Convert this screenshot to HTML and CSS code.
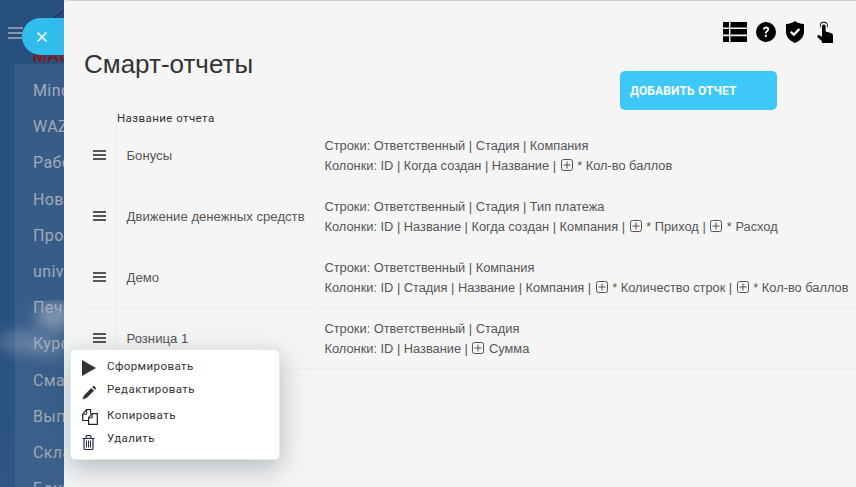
FILE: index.html
```html
<!DOCTYPE html>
<html lang="ru">
<head>
<meta charset="utf-8">
<title>Смарт-отчеты</title>
<link rel="stylesheet" href="styles.css">
</head>
<body>
<div class="stage">
  <aside class="sidebar">
    <svg class="logo" width="12" height="8" viewBox="0 0 12 8"><path d="M0 8L10 0" stroke="#1b2a55" stroke-width="1.200" fill="none"/></svg>
    <div class="burger"><i></i><i></i><i></i></div>
    <div class="brand">MAG</div>
    <svg class="clouds" width="64" height="200" viewBox="0 0 64 200">
      <defs><filter id="blur"><feGaussianBlur stdDeviation="7"/></filter></defs>
      <g fill="#aebccb" filter="url(#blur)">
        <ellipse cx="54" cy="16" rx="18" ry="14" opacity=".55"/>
        <ellipse cx="22" cy="42" rx="24" ry="12" opacity=".32"/>
        <ellipse cx="50" cy="48" rx="20" ry="12" opacity=".24"/>
      </g>
    </svg>
    <ul class="nav">
      <li>Mind</li><li>WAZ</li><li>Рабо</li><li>Ново</li><li>Прос</li><li>unive</li>
      <li>Печк</li><li>Курс</li><li>Смар</li><li>Выпл</li><li>Скла</li><li>Бону</li>
    </ul>
  </aside>
  <button class="close" type="button" aria-label="Закрыть">
    <svg width="12" height="12" viewBox="0 0 12 12"><path d="M1.500 1.500l9 9M10.500 1.500l-9 9" stroke="#fff" stroke-width="1.600" fill="none"/></svg>
  </button>
  <main class="panel">
    <div class="tools">
      <svg width="24" height="20" viewBox="0 0 24 20"><path d="M0 0h6v5.400H0zM7.400 0H24v5.400H7.400zM0 7h6v5.600H0zM7.400 7H24v5.600H7.400zM0 14.200h6V20H0zM7.400 14.200H24V20H7.400z"/></svg>
      <svg width="20" height="20" viewBox="0 0 20 20"><circle cx="10" cy="10" r="10"/><path d="M6.900 7.400c.2-1.800 1.500-2.800 3.200-2.800 1.800 0 3.100 1.100 3.100 2.700 0 2.300-2.500 2.300-2.500 4.200H8.900c0-2.800 2.300-2.800 2.300-4.100 0-.6-.5-1-1.100-1-.7 0-1.200.4-1.300 1.200z" fill="#fff"/><rect x="8.800" y="12.700" width="2" height="2.200" fill="#fff"/></svg>
      <svg width="18" height="22" viewBox="0 0 18 22"><path d="M9 0c2 1.700 5 2.900 9 3.100v7.400C18 15.800 14.500 19.800 9 22 3.500 19.800 0 15.800 0 10.500V3.100C4 2.900 7 1.700 9 0z"/><path d="M4.800 10.800l3 3 5.600-5.800" fill="none" stroke="#fff" stroke-width="2.200"/></svg>
      <svg width="16" height="22" viewBox="0 0 16 22"><path d="M6.800 0.800a4 4 0 0 1 4 4c0 1-.3 1.700-.8 2.400V5a3.200 3.200 0 0 0-6.400 0v2.200c-.5-.7-.8-1.400-.8-2.400a4 4 0 0 1 4-4z"/><path d="M5 5.200a1.800 1.800 0 0 1 3.600 0v5.400l5.300 1.300c1.300.4 2.100 1.300 2.100 2.700V22H5l-.4-2.300L.7 16.400C-.5 15.200 1 13.300 2.500 14.200L5 15.800z"/></svg>
    </div>
    <div class="head">
      <h1>Смарт-отчеты</h1>
      <button class="add" type="button">Добавить отчет</button>
    </div>
    <div class="caption">Название отчета</div>
    <table class="reports">
      <tr>
        <td class="drag"><span class="bars"><i></i><i></i><i></i></span></td>
        <td class="name">Бонусы</td>
        <td class="desc">Строки: Ответственный | Стадия | Компания<br>Колонки: ID | Когда создан | Название | <svg class="plus" viewBox="0 0 12 12"><use href="#plus"/></svg> * Кол-во баллов</td>
      </tr>
      <tr>
        <td class="drag"><span class="bars"><i></i><i></i><i></i></span></td>
        <td class="name">Движение денежных средств</td>
        <td class="desc">Строки: Ответственный | Стадия | Тип платежа<br>Колонки: ID | Название | Когда создан | Компания | <svg class="plus" viewBox="0 0 12 12"><use href="#plus"/></svg> * Приход | <svg class="plus" viewBox="0 0 12 12"><use href="#plus"/></svg> * Расход</td>
      </tr>
      <tr>
        <td class="drag"><span class="bars"><i></i><i></i><i></i></span></td>
        <td class="name">Демо</td>
        <td class="desc">Строки: Ответственный | Компания<br>Колонки: ID | Стадия | Название | Компания | <svg class="plus" viewBox="0 0 12 12"><use href="#plus"/></svg> * Количество строк | <svg class="plus" viewBox="0 0 12 12"><use href="#plus"/></svg> * Кол-во баллов</td>
      </tr>
      <tr>
        <td class="drag"><span class="bars"><i></i><i></i><i></i></span></td>
        <td class="name">Розница 1</td>
        <td class="desc">Строки: Ответственный | Стадия<br>Колонки: ID | Название | <svg class="plus" viewBox="0 0 12 12"><use href="#plus"/></svg> Сумма</td>
      </tr>
    </table>
    <svg class="defs" width="0" height="0"><symbol id="plus" viewBox="0 0 12 12"><rect x=".5" y=".5" width="11" height="11" rx="2" fill="none" stroke="currentColor"/><path d="M6 2.500v7M2.500 6h7" stroke="currentColor" fill="none"/></symbol></svg>
  </main>
  <div class="menu">
    <div class="item item-run"><svg width="14" height="16" viewBox="0 0 14 16"><path d="M0 0l14 8L0 16z" fill="#333"/></svg><span>Сформировать</span></div>
    <div class="item item-edit"><svg width="14" height="14" viewBox="0 0 14 14"><path d="M9.300 2l2.700 2.700-7.400 7.400L.5 13.500l1.400-4.100zM10.200 1.100l.8-.8c.4-.4 1-.4 1.400 0l1.300 1.300c.4.400.4 1 0 1.400l-.8.800z" fill="#333"/></svg><span>Редактировать</span></div>
    <div class="item item-copy"><svg width="16" height="16" viewBox="0 0 16 16"><path d="M6.500 11.500H.7V5.200L4.600.7h4v4" fill="none" stroke="#222" stroke-width="1.200"/><path d="M4.600.9v4.300H.9" fill="none" stroke="#222"/><path d="M6.600 15.300V8.700l3.600-4h5.100v10.600z" fill="#fff" stroke="#222" stroke-width="1.200"/><path d="M10.200 4.900v3.900H6.800" fill="none" stroke="#222"/></svg><span>Копировать</span></div>
    <div class="item item-del"><svg width="13" height="15" viewBox="0 0 13 15"><path d="M.5 3.500h12M2 3.500V13c0 .8.500 1.500 1.300 1.500h6.400c.8 0 1.300-.7 1.300-1.500V3.500M4.200 3.500V1.800C4.200 1 4.700.5 5.500.5h2c.8 0 1.300.5 1.300 1.300v1.700" fill="none" stroke="#1f2f4a" stroke-width="1.200"/><path d="M4.500 5.500v7M6.500 5.500v7M8.500 5.500v7" stroke="#1f2f4a" fill="none"/></svg><span>Удалить</span></div>
  </div>
</div>
</body>
</html>
```
FILE: styles.css
```css
* { box-sizing: border-box; }
html, body { margin: 0; padding: 0; height: 100%; overflow: hidden; }
body { font-family: "Liberation Sans", Arial, sans-serif; background: #f5f5f5; }
.stage { position: relative; width: 856px; height: 487px; overflow: hidden; }

.sidebar {
  position: absolute; left: 0; top: 0; width: 64px; height: 487px; overflow: hidden;
  background: linear-gradient(#28507e, #27507f 60%, #2f5685);
}
.logo { position: absolute; left: 53px; top: 11px; }
.burger { position: absolute; left: 8px; top: 27px; width: 15px; }
.burger i { display: block; height: 2px; background: #8795a8; margin-bottom: 3px; }
.brand { position: absolute; left: 33px; top: 47px; font: bold 17px "Liberation Sans", sans-serif; color: #7f1d1d; }
.nav {
  position: absolute; left: 15px; top: 64px; width: 49px; height: 423px; overflow: hidden;
  list-style: none; margin: 0; padding: 9px 0 0 18px;
  background: rgba(255, 255, 255, .07);
  font: 16px/36.200px Roboto, sans-serif; letter-spacing: .4px; color: #a0aab8;
  white-space: nowrap;
}
.clouds { position: absolute; left: 0; top: 300px; }

.close {
  position: absolute; left: 22px; top: 18px; width: 42px; height: 37px; z-index: 3;
  border: 0; padding: 0 2px 0 0; border-radius: 19px 0 0 19px; background: #30bdec;
  display: flex; align-items: center; justify-content: center;
}

.panel {
  position: absolute; left: 64px; top: 0; right: 0; bottom: 0;
  background: #f5f5f5; border-top: 1px solid #cfcfcf; border-top-left-radius: 4px; padding-left: 20px; z-index: 1;
}
.tools { display: flex; justify-content: flex-end; align-items: center; gap: 9px; height: 22px; margin-top: 20px; padding-right: 23px; color: #000; }
.tools svg:nth-child(2) { margin-right: 1px; }
.tools svg:nth-child(3) { margin-right: 4px; }
.head { display: flex; align-items: flex-start; margin-top: 6px; }
h1 { margin: 0; width: 536px; font-size: 26px; font-weight: 400; line-height: 30px; color: #333; }
.add {
  width: 157px; height: 39px; margin-top: 22px; padding: 0 0 0 10px; border: 0; border-radius: 5px;
  background: #3ec8f8; color: #fff; text-align: left;
  font: 700 12px Roboto, sans-serif; letter-spacing: .15px; text-transform: uppercase;
}
.caption { margin: 1px 0 0 33px; height: 14px; font: 11.500px/15px Roboto, sans-serif; letter-spacing: .42px; color: #333; }
.reports { border-collapse: collapse; table-layout: fixed; width: 772px; font-size: 12.820px; line-height: 20px; color: #555; }
.reports td { height: 61px; padding: 2px 0 0; border-bottom: 1px solid #eee; vertical-align: middle; white-space: nowrap; }
.reports tr:first-child td { height: 60px; }
.drag { width: 32px; border-right: 1px solid #eee; text-align: center; }
.name { width: 198px; padding-left: 10px !important; border-right: 1px solid #eee; font-size: 13.150px; }
.desc { padding-left: 10px !important; }
.bars { display: inline-block; width: 13px; vertical-align: middle; }
.bars i { display: block; height: 2px; margin-bottom: 2px; background: #555; }
.plus { width: 12px; height: 12px; margin: 0 1px; vertical-align: -1px; color: #555; }
.defs { position: absolute; }

.menu {
  position: absolute; left: 70px; top: 349px; width: 210px; height: 111px; z-index: 4;
  background: #fff; border-radius: 5px; border: 1px solid #e0eaea;
  box-shadow: 0 8px 28px rgba(50, 70, 80, .35); padding: 9px 0 0 11px;
  font: 11.500px Roboto, sans-serif; letter-spacing: .42px; color: #333;
}
.item { display: flex; align-items: flex-start; }
.item svg { flex: none; }
.item span { margin-left: 11px; }
.item-run { height: 23px; }
.item-run svg { margin-top: 1px; }
.item-edit { height: 25px; }
.item-edit svg { margin-top: 4px; }
.item-copy { height: 24px; }
.item-copy span { margin-left: 9px; margin-top: 1px; }
.item-copy svg { margin-top: 2px; }
.item-del svg { margin-top: 4px; }
.item-del span { margin-left: 12px; }
```
